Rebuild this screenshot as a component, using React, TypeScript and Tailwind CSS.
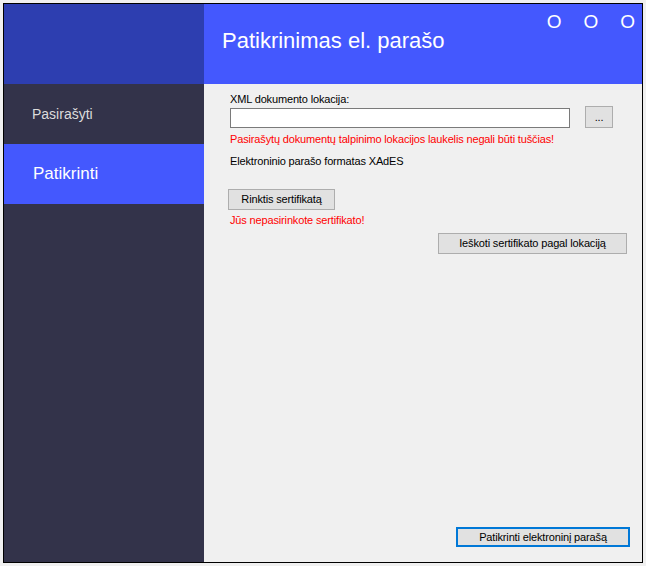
export default function App() {
  const ui = { fontFamily: '"Liberation Sans", Arial, sans-serif' };

  return (
    <div className="min-h-[566px] bg-[#f0f0f0] p-[3px]" style={ui}>
      <div className="flex h-[560px] w-[640px] border border-black">
        {/* Sidebar */}
        <aside className="flex w-[200px] flex-col bg-[#33334a]">
          <div className="h-[80px] bg-[#2d3eb0]" />
          <div className="flex h-[60px] items-center pl-[28px] text-[14px] text-[#dcdcdc]">
            Pasirašyti
          </div>
          <div className="flex h-[60px] items-center bg-[#4458fe] pl-[29px] text-[17px] text-white">
            Patikrinti
          </div>
        </aside>

        {/* Main */}
        <main className="flex flex-1 flex-col bg-[#f0f0f0]">
          <header className="flex h-[80px] items-start justify-between bg-[#4458fe] text-white">
            <h1 className="pl-[18px] pt-[24px] text-[22px] leading-[26px]">Patikrinimas el. parašo</h1>
            <div className="flex gap-[22px] pr-[7px] pt-[6px] text-[19px] leading-[24px]">
              <span>O</span>
              <span>O</span>
              <span>O</span>
            </div>
          </header>

          <section className="flex flex-1 flex-col pl-[26px] pt-[9px] text-[11px] leading-[13px] tracking-[-0.15px] text-black">
            <label>XML dokumento lokacija:</label>
            <div className="flex items-end">
              <div className="h-[20px] w-[340px] border border-[#7a7a7a] bg-white" />
              <button className="ml-[15px] h-[22px] w-[28px] border border-[#adadad] bg-[#e1e1e1] text-[11px] leading-[13px]">
                ...
              </button>
            </div>
            <p className="mt-[5px] text-[#ff0000]">
              Pasirašytų dokumentų talpinimo lokacijos laukelis negali būti tuščias!
            </p>
            <p className="mt-[9px]">Elektroninio parašo formatas XAdES</p>

            <button className="-ml-[2px] mt-[21px] h-[21px] w-[107px] border border-[#adadad] bg-[#e1e1e1] leading-[13px]">
              Rinktis sertifikatą
            </button>
            <p className="mt-[4px] text-[#ff0000]">Jūs nepasirinkote sertifikato!</p>
            <button className="ml-[208px] mt-[6px] h-[21px] w-[189px] border border-[#adadad] bg-[#e1e1e1] leading-[13px]">
              Ieškoti sertifikato pagal lokaciją
            </button>

            <div className="mt-auto flex justify-end pb-[15px] pr-[12px]">
              <button className="h-[20px] w-[174px] border-2 border-[#0078d7] bg-[#e1e1e1] leading-[13px]">
                Patikrinti elektroninį parašą
              </button>
            </div>
          </section>
        </main>
      </div>
    </div>
  );
}
